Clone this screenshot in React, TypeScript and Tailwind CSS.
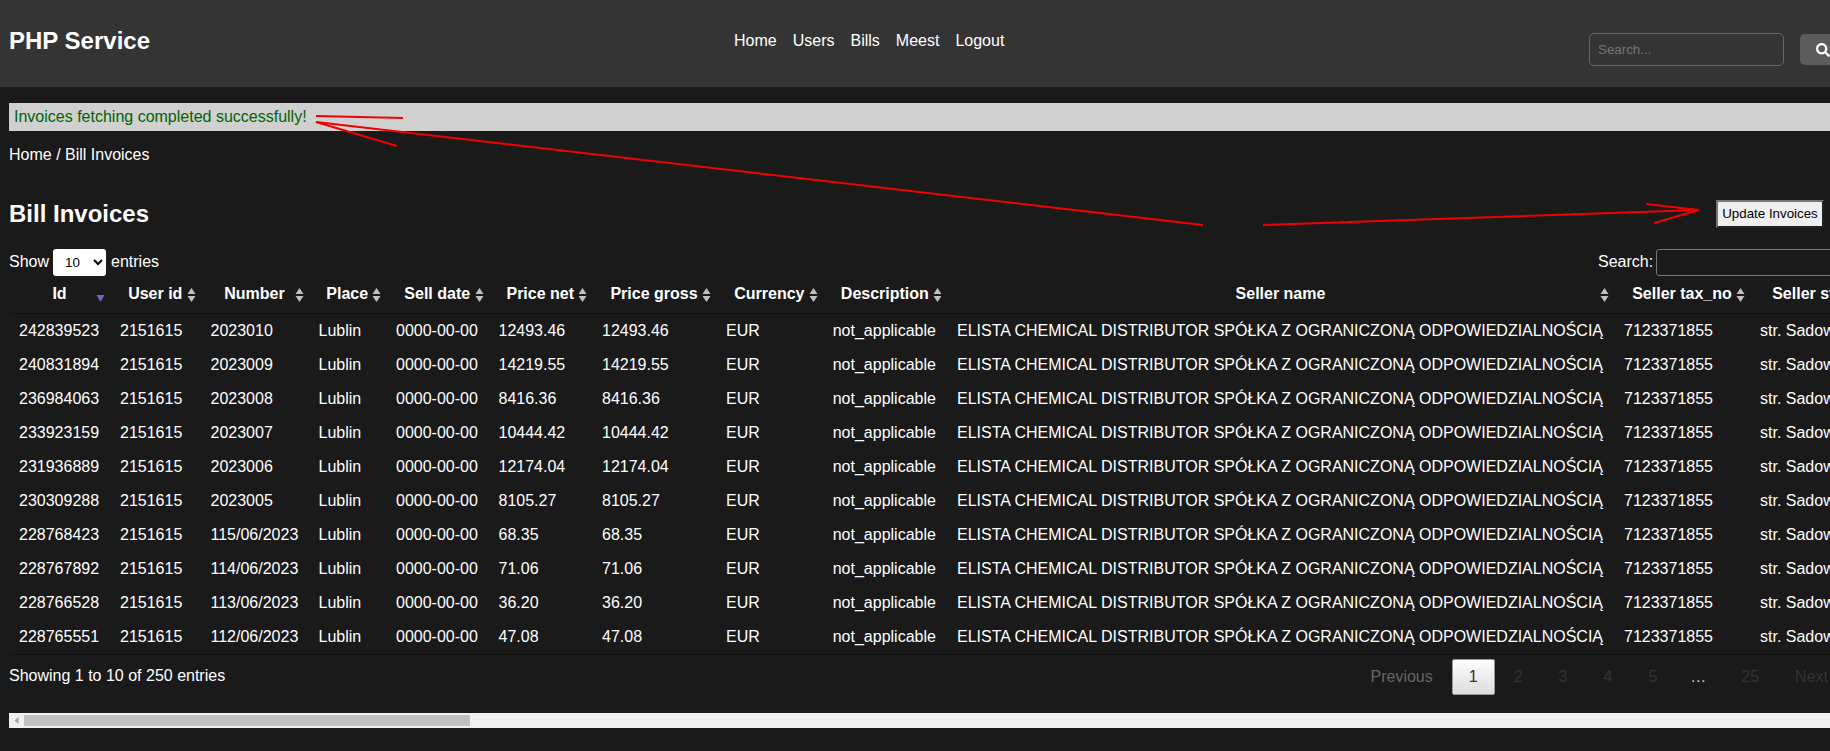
import React from 'react';
import { FaSearch } from 'react-icons/fa';

const rows = [
  ['242839523', '2023010', '12493.46'],
  ['240831894', '2023009', '14219.55'],
  ['236984063', '2023008', '8416.36'],
  ['233923159', '2023007', '10444.42'],
  ['231936889', '2023006', '12174.04'],
  ['230309288', '2023005', '8105.27'],
  ['228768423', '115/06/2023', '68.35'],
  ['228767892', '114/06/2023', '71.06'],
  ['228766528', '113/06/2023', '36.20'],
  ['228765551', '112/06/2023', '47.08'],
];

const headers = ['Id', 'User id', 'Number', 'Place', 'Sell date', 'Price net', 'Price gross', 'Currency', 'Description', 'Seller name', 'Seller tax_no', 'Seller street'];

const SortIcon: React.FC<{ sorted: boolean }> = ({ sorted }) => (
  <svg width="9" height="14" viewBox="0 0 9 14" className="absolute right-[5px] top-[12px]">
    {sorted ? (
      <path d="M0.5 7h8l-4 7z" fill="#6a6ac8" />
    ) : (
      <>
        <path d="M0.5 6h8l-4-6z" fill="#c0c0c0" />
        <path d="M0.5 8h8l-4 6z" fill="#c0c0c0" />
      </>
    )}
  </svg>
);

export default function App() {
  return (
    <div className="relative h-screen w-full overflow-hidden bg-[#1a1a1a] text-white font-['Liberation_Sans',Arial,sans-serif] text-base leading-[18px]">
      <header className="flex h-[87px] w-full items-start bg-[#343434] pl-[9px]">
        <div className="mt-[27px] text-2xl leading-[27px] font-bold">PHP Service</div>
        <nav className="ml-[584px] mt-[32px] flex gap-4">
          <a>Home</a>
          <a>Users</a>
          <a>Bills</a>
          <a>Meest</a>
          <a>Logout</a>
        </nav>
        <div className="-mr-[20px] ml-auto mt-[33px] flex shrink-0 items-start gap-4">
          <input
            placeholder="Search..."
            className="h-[33px] w-[195px] rounded-[5px] border border-[#666] bg-transparent px-2 text-[13.33px] placeholder:text-[#757575] outline-none"
          />
          <button className="mt-[1px] flex h-[31px] w-[50px] items-center rounded-[5px] bg-[#5c5c5c] pl-[16px] text-[14px] text-white">
            <FaSearch />
          </button>
        </div>
      </header>

      <main className="pl-[9px]">
        <div className="mt-4 flex h-[28px] items-center bg-[#d0d0d0] px-[5px] text-[#006400]">
          Invoices fetching completed successfully!
        </div>
        <div className="mt-[15px]">Home / Bill Invoices</div>

        <div className="mt-[36px] flex h-[28px] items-center justify-between pr-[6px]">
          <h2 className="text-2xl font-bold">Bill Invoices</h2>
          <button className="h-[28px] w-[108px] border-2 border-[#767676] [border-style:outset] bg-[#efefef] text-[13.33px] text-black">
            Update Invoices
          </button>
        </div>

        <div className="mt-[21px] flex h-[27px] items-center justify-between">
          <div className="flex items-center gap-[4px]">
            <span className="pb-[2px]">Show</span>
            <select className="h-[27px] w-[53px] rounded-[3px] bg-white pl-[8px] text-[13.33px] text-black">
              <option>10</option>
            </select>
            <span className="ml-[1px] pb-[2px]">entries</span>
          </div>
          <div className="flex w-[232px] shrink-0 items-center gap-[3px]">
            <span className="pb-[2px]">Search:</span>
            <input className="h-[27px] w-[200px] shrink-0 rounded-[3px] border border-[#767676] bg-transparent" />
          </div>
        </div>

        <div className="overflow-hidden">
          <table className="w-[1877px] table-fixed">
            <colgroup>
              <col className="w-[101px]" />
              <col className="w-[90.5px]" />
              <col className="w-[108px]" />
              <col className="w-[77.5px]" />
              <col className="w-[102.5px]" />
              <col className="w-[103.5px]" />
              <col className="w-[124px]" />
              <col className="w-[106.7px]" />
              <col className="w-[124.3px]" />
              <col className="w-[667px]" />
              <col className="w-[136px]" />
              <col className="w-[136px]" />
            </colgroup>
            <thead>
              <tr className="border-b border-[#111]">
                {headers.map((h, i) => (
                  <th key={h} className="relative h-[37px] whitespace-nowrap px-[10px] text-center font-bold">
                    {h}
                    <SortIcon sorted={i === 0} />
                  </th>
                ))}
              </tr>
            </thead>
            <tbody>
              {rows.map((r, i) => (
                <tr key={r[0]} className={i === rows.length - 1 ? 'border-b border-[#111]' : ''}>
                  <td className="whitespace-nowrap px-[10px] py-2">{r[0]}</td>
                  <td className="whitespace-nowrap px-[10px] py-2">2151615</td>
                  <td className="whitespace-nowrap px-[10px] py-2">{r[1]}</td>
                  <td className="whitespace-nowrap px-[10px] py-2">Lublin</td>
                  <td className="whitespace-nowrap px-[10px] py-2">0000-00-00</td>
                  <td className="whitespace-nowrap px-[10px] py-2">{r[2]}</td>
                  <td className="whitespace-nowrap px-[10px] py-2">{r[2]}</td>
                  <td className="whitespace-nowrap px-[10px] py-2">EUR</td>
                  <td className="whitespace-nowrap px-[10px] py-2">not_applicable</td>
                  <td className="whitespace-nowrap px-[10px] py-2">ELISTA CHEMICAL DISTRIBUTOR SPÓŁKA Z OGRANICZONĄ ODPOWIEDZIALNOŚCIĄ</td>
                  <td className="whitespace-nowrap px-[10px] py-2">7123371855</td>
                  <td className="whitespace-nowrap px-[10px] py-2">str. Sadowa 5</td>
                </tr>
              ))}
            </tbody>
          </table>
        </div>

        <div className="flex w-[1836px] items-start justify-between">
          <div className="pt-[12px]">Showing 1 to 10 of 250 entries</div>
          <div className="mt-[4px] flex items-center text-[#333]">
            <span className="ml-[2px] border border-transparent px-4 py-2 text-[#666]">Previous</span>
            <span className="ml-[2px] rounded-[2px] border border-[#979797] bg-gradient-to-b from-white to-[#dcdcdc] px-4 py-2">1</span>
            <span className="ml-[2px] border border-transparent px-4 py-2">2</span>
            <span className="ml-[2px] border border-transparent px-4 py-2">3</span>
            <span className="ml-[2px] border border-transparent px-4 py-2">4</span>
            <span className="ml-[2px] border border-transparent px-4 py-2">5</span>
            <span className="px-4 text-[#ccc]">…</span>
            <span className="ml-[2px] border border-transparent px-4 py-2">25</span>
            <span className="ml-[2px] border border-transparent px-4 py-2">Next</span>
          </div>
        </div>

        <div className="mt-[18px] flex h-[15px] items-center bg-[#f0f0f0]">
          <svg width="15" height="15" viewBox="0 0 15 15">
            <path d="M9.5 4v7l-4-3.5z" fill="#a3a3a3" />
          </svg>
          <div className="h-[11px] w-[446px] bg-[#c0c0c0]" />
        </div>
      </main>

      {/* red annotation strokes drawn over the page */}
      <svg className="pointer-events-none absolute inset-0" width="1830" height="751" viewBox="0 0 1830 751">
        <g stroke="#f00000" strokeWidth="2" fill="none">
          <path d="M316 116L403 118" />
          <path d="M316 122L397 146" />
          <path d="M316 122L1203 225" />
          <path d="M1263 225L1699 210" />
          <path d="M1646 204L1699 210L1654 223" />
        </g>
      </svg>
    </div>
  );
}
